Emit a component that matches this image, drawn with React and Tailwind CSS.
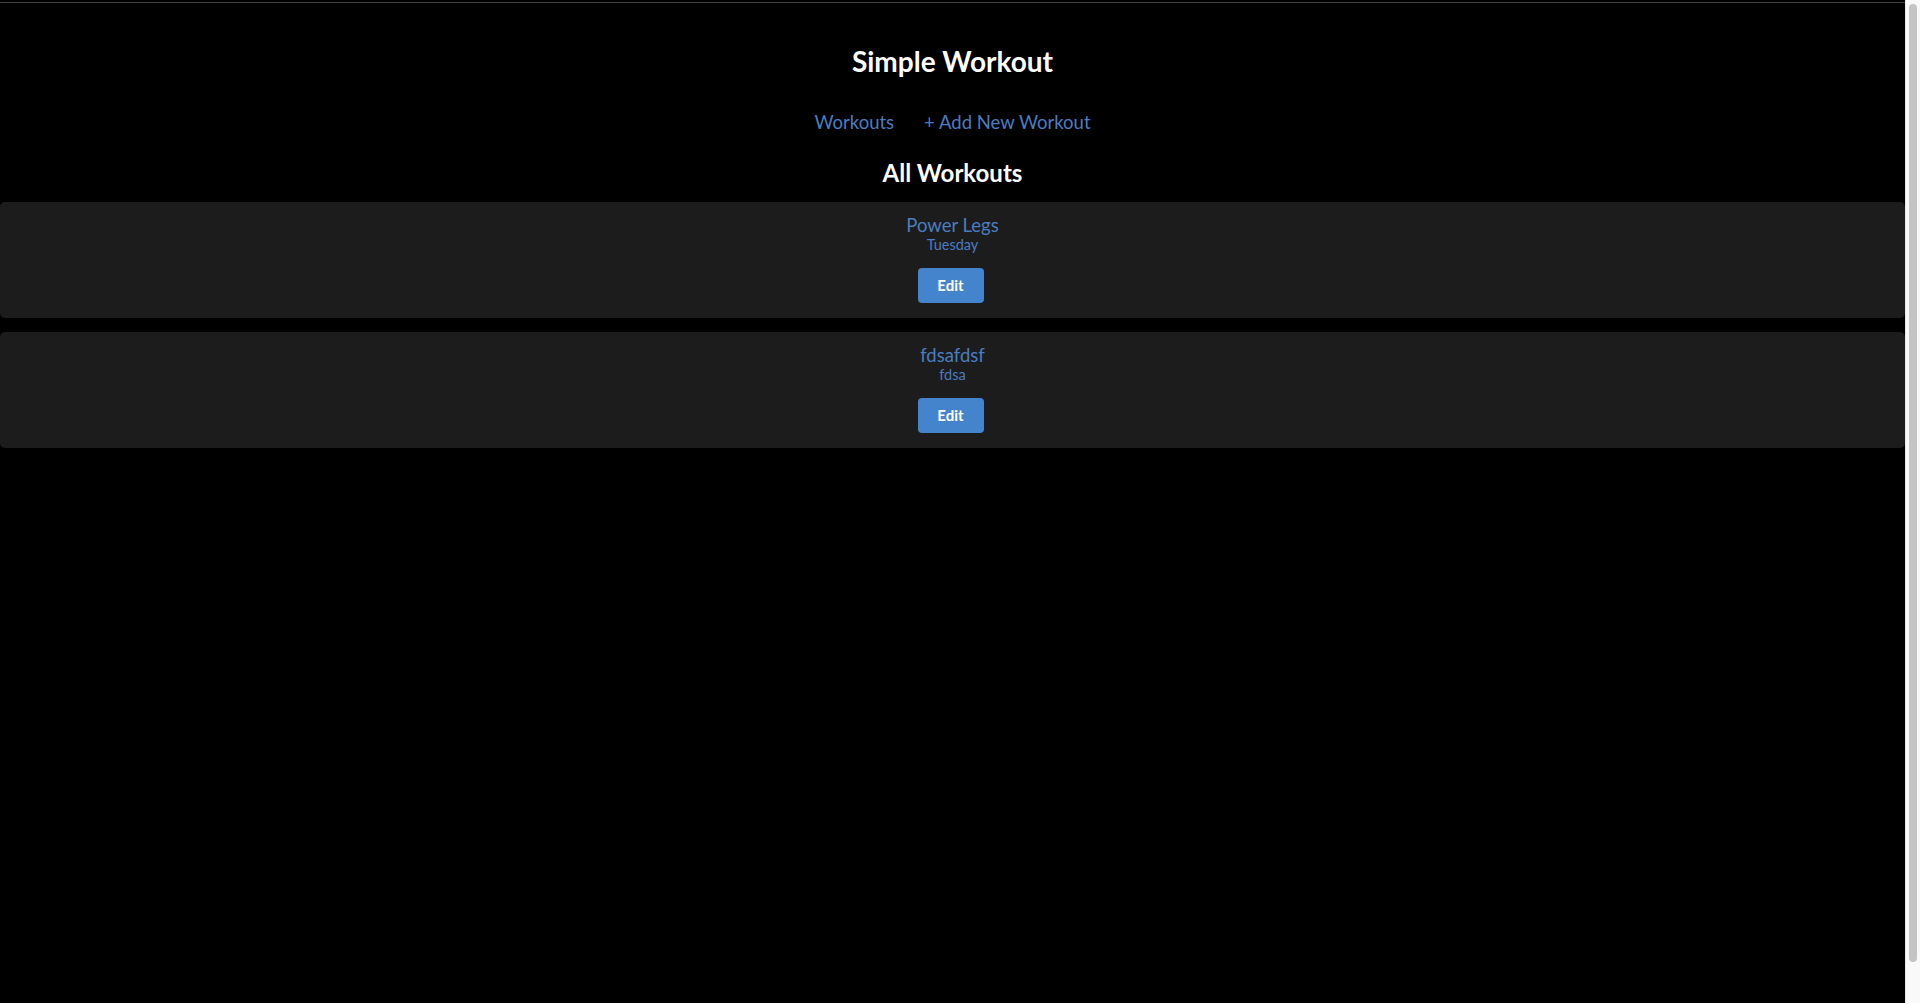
import React from 'react';

const workouts = [
  { id: 1, name: 'Power Legs', day: 'Tuesday' },
  { id: 2, name: 'fdsafdsf', day: 'fdsa' },
];

const WorkoutCard = ({ workout }) => {
  return (
    <div className="flex flex-col items-center bg-[#1c1c1c] rounded-[5px] pt-[12px] pb-[15px]">
      <a href="#" className="text-[18.5px] leading-[23px] text-[#4a7dc0]">
        {workout.name}
      </a>
      <div className="text-[14.5px] leading-[16px] text-[#4a7dc0]">{workout.day}</div>
      <button
        type="button"
        className="mt-[15px] mr-[4px] w-[66px] h-[35px] rounded-[4px] bg-[#4484cc] text-white text-[15px] font-bold"
      >
        Edit
      </button>
    </div>
  );
};

// fake browser scrollbar seen at the right edge of the screenshot
const Scrollbar = () => (
  <div className="w-[15px] shrink-0 bg-[#f9f9f9] border-l border-[#e6e6e6] pt-[4px] pl-[3px] h-[1003px]">
    <div className="w-[8px] h-[958px] rounded-full bg-[#c4c4c4]" />
  </div>
);

const App = () => {
  return (
    <div className="flex h-[1003px] overflow-hidden bg-black" style={{ fontFamily: 'Lato, "Open Sans", sans-serif' }}>
      <main className="flex-1 min-w-0 text-white">
        <div className="h-[2px]" />
        <div className="h-px bg-[#3f3f3f]" />
        <h1 className="mt-[41px] text-center text-[28px] leading-[34px] font-bold">Simple Workout</h1>
        <nav className="mt-[32px] flex justify-center gap-[30px] text-[18.5px] leading-[24px] text-[#4a7dc0]">
          <a href="#">Workouts</a>
          <a href="#">+ Add New Workout</a>
        </nav>
        <h2 className="mt-[24px] text-center text-[24px] leading-[30px] font-bold">All Workouts</h2>
        <div className="mt-[14px] flex flex-col gap-[14px]">
          {workouts.map((w) => (
            <WorkoutCard key={w.id} workout={w} />
          ))}
        </div>
      </main>
      <Scrollbar />
    </div>
  );
};

export default App;
